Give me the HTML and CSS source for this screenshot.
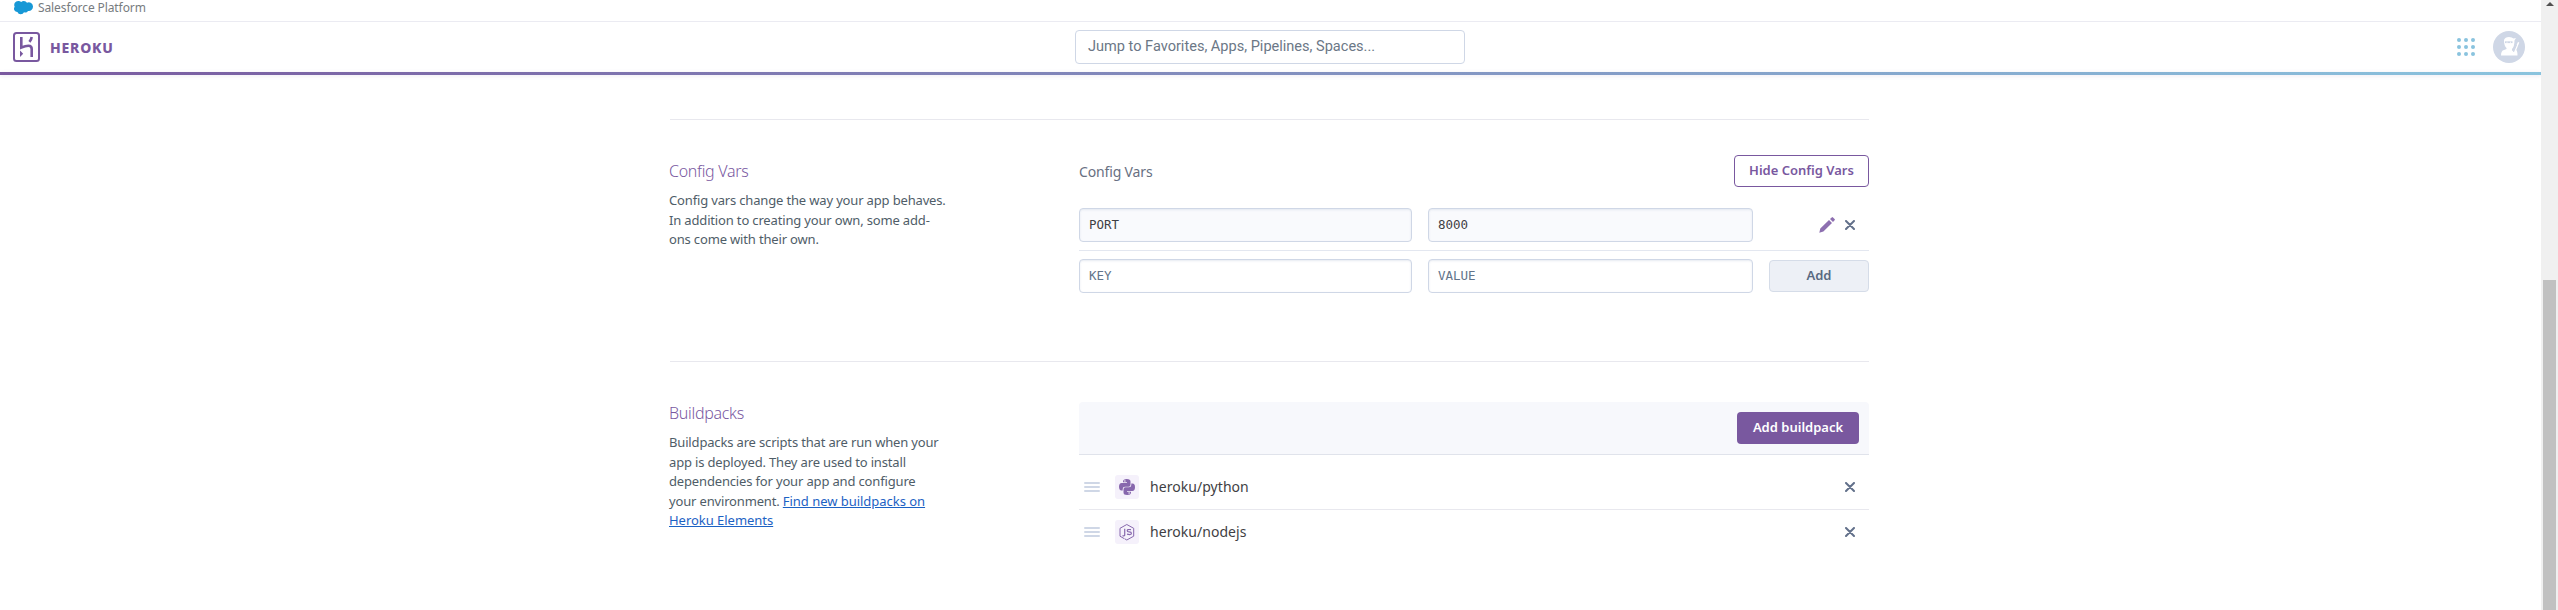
FILE: index.html
```
<!DOCTYPE html>
<html lang="en">
<head>
<meta charset="utf-8">
<title>Heroku Settings</title>
<link rel="stylesheet" href="styles.css">
</head>
<body>
<div class="page">
  <div class="platform">
    <svg class="cloud" width="20" height="15" viewBox="0 0 20 15"><path fill="#1798d6" d="M8.2 2.1A3.5 3.5 0 0 1 10.800 1a3.700 3.700 0 0 1 3.200 1.700A4.300 4.300 0 0 1 20 6.800a4.200 4.200 0 0 1-5 4.100 3.100 3.100 0 0 1-4 1.300 3.600 3.600 0 0 1-6.600-.2A3.300 3.300 0 0 1 1.700 6.700 3.900 3.900 0 0 1 5.200 1a3.900 3.900 0 0 1 3 1.100z"/></svg>
    <span class="platform-name">Salesforce Platform</span>
  </div>
  <header class="header">
    <div class="brand">
      <svg width="27" height="30" viewBox="0 0 27 30"><rect x="1" y="1" width="25" height="28" rx="2.500" fill="none" stroke="#79589f" stroke-width="2"/><g fill="none" stroke="#79589f" stroke-width="2.600"><path d="M8.300 5v10.500c3-1.200 5.200-1.700 7.200-1.700 2.800 0 3.200 1.700 3.200 3.200v8"/><path d="M18.700 5c-.2 1.700-1 3.300-2.300 4.900" /></g><path fill="#79589f" d="M7 18.500l3.200 3.200L7 25z"/></svg>
      <span class="brand-name">HEROKU</span>
    </div>
    <div class="search"><span class="search-text">Jump to Favorites, Apps, Pipelines, Spaces...</span></div>
    <div class="account">
      <svg width="18" height="18" viewBox="0 0 18 18" fill="#8ac3de"><circle cx="2" cy="2" r="2"/><circle cx="9" cy="2" r="2"/><circle cx="16" cy="2" r="2"/><circle cx="2" cy="9" r="2"/><circle cx="9" cy="9" r="2"/><circle cx="16" cy="9" r="2"/><circle cx="2" cy="16" r="2"/><circle cx="9" cy="16" r="2"/><circle cx="16" cy="16" r="2"/></svg>
      <svg width="32" height="32" viewBox="0 0 32 32"><circle cx="16" cy="16" r="16" fill="#cfd7e6"/><path fill="#fff" d="M11 9q1-3 5-3 3 0 4.500 1.500L23 7l-1.500 2.500q0 6-2.500 8.500v1.500l1.500 1L25 11l1.300.6-3 7.400q1.200 1 1.200 5.500H8q0-5 3-5.500l2.500-1v-1Q11 15 11 9z"/><path stroke="#cfd7e6" stroke-width="1.800" d="M12 11.200h7.500"/><path stroke="#fff" d="M14 10.700v1M17.500 10.700v1"/><path stroke="#cfd7e6" d="M20.500 21l3-7"/></svg>
    </div>
  </header>
  <div class="rainbow"></div>
  <main class="content">
    <section class="section section-config">
      <div class="intro">
        <h2 class="title">Config Vars</h2>
        <p class="desc">Config vars change the way your app behaves.<br>In addition to creating your own, some add-<br>ons come with their own.</p>
      </div>
      <div class="panel">
        <div class="panel-head"><span class="label">Config Vars</span><button class="btn btn-outline">Hide Config Vars</button></div>
        <div class="var-row var-row-set">
          <div class="field filled">PORT</div>
          <div class="field filled field-value">8000</div>
          <div class="tools">
            <svg width="16" height="16" viewBox="0 0 16 16" fill="#8d6fb0"><path d="M.3 15.700l1-4.200L10 3l3 3-8.600 8.500zM11 2l1.700-1.600q.6-.6 1.300 0l1.600 1.600q.6.700 0 1.300L14 5z"/></svg>
            <svg width="10" height="10" viewBox="0 0 10 10" fill="none" stroke="#62708a" stroke-width="2" stroke-linecap="round"><path d="M1 1l8 8M9 1l-8 8"/></svg>
          </div>
        </div>
        <div class="var-row var-row-new">
          <div class="field">KEY</div>
          <div class="field field-value">VALUE</div>
          <button class="btn btn-add">Add</button>
        </div>
      </div>
    </section>
    <section class="section section-build">
      <div class="intro">
        <h2 class="title">Buildpacks</h2>
        <p class="desc">Buildpacks are scripts that are run when your<br>app is deployed. They are used to install<br>dependencies for your app and configure<br>your environment. <a class="link">Find new buildpacks on<br>Heroku Elements</a></p>
      </div>
      <div class="panel panel-build">
        <div class="banner"><button class="btn btn-primary">Add buildpack</button></div>
        <div class="pack pack-first">
          <svg class="grip" width="16" height="10" viewBox="0 0 16 10" stroke="#cfd7e6" stroke-width="2" stroke-linecap="round"><path d="M1 1h14M1 5h14M1 9h14"/></svg>
          <svg class="pack-icon" width="24" height="24" viewBox="0 0 24 24"><rect width="24" height="24" rx="3" fill="#f5f1fb"/><g fill="#8767ad"><path d="M8 6.500Q8 4 11.800 4t3.700 2.500v3.200q0 2-2 2H10q-2.300 0-2.300 2.300v1.500H6.500Q4 15.500 4 11.800T6.700 8H12v-.7H8z"/><path d="M16 17.500q0 2.500-3.800 2.500t-3.700-2.500v-3.200q0-2 2-2H14q2.300 0 2.300-2.300V8.500h1.200q2.500 0 2.500 3.700T17.300 16H12v.7h4z"/></g><circle cx="9.900" cy="6" r=".7" fill="#fff"/><circle cx="14.100" cy="18" r=".7" fill="#fff"/></svg>
          <span class="pack-name">heroku/python</span>
          <svg class="remove" width="10" height="10" viewBox="0 0 10 10" fill="none" stroke="#62708a" stroke-width="2" stroke-linecap="round"><path d="M1 1l8 8M9 1l-8 8"/></svg>
        </div>
        <div class="pack">
          <svg class="grip" width="16" height="10" viewBox="0 0 16 10" stroke="#cfd7e6" stroke-width="2" stroke-linecap="round"><path d="M1 1h14M1 5h14M1 9h14"/></svg>
          <svg class="pack-icon" width="24" height="24" viewBox="0 0 24 24"><rect width="24" height="24" rx="3" fill="#f5f1fb"/><g fill="none" stroke="#8767ad" stroke-linejoin="round"><path d="M9 18.500l-4-2.300V8.300L11.800 4.500l6.900 3.800v7.900L11.800 20l-2.300-1.300"/><path stroke-width="1.200" d="M9.700 8.700v6.200q0 1.300-2.200.7M16 9.700q-3.800-.7-3.800 1 0 1.100 2 1.200 2.200.2 2.200 1.400 0 1.900-4.400.9"/></g></svg>
          <span class="pack-name">heroku/nodejs</span>
          <svg class="remove" width="10" height="10" viewBox="0 0 10 10" fill="none" stroke="#62708a" stroke-width="2" stroke-linecap="round"><path d="M1 1l8 8M9 1l-8 8"/></svg>
        </div>
      </div>
    </section>
  </main>
</div>
<div class="scrollbar"><div class="scroll-up"></div><div class="scroll-thumb"></div></div>
</body>
</html>
```

FILE: styles.css
```
* { box-sizing: border-box; }
body { margin: 0; display: flex; height: 610px; overflow: hidden; background: #fff; font-family: "Noto Sans", sans-serif; color: #596981; }
.page { width: 2541px; height: 610px; }
svg { display: block; flex: none; }
.platform { height: 22px; border-bottom: 1px solid #ebebf2; display: flex; align-items: flex-start; padding-left: 13px; gap: 5px; }
.platform-name { font-size: 12px; letter-spacing: -.1px; line-height: 16px; color: #777c80; white-space: nowrap; }
.header { height: 50px; display: grid; grid-template-columns: 1075px 390px 1fr; align-items: center; }
.brand { display: flex; align-items: center; gap: 10px; padding-left: 13px; height: 50px; }
.brand-name { font-size: 14px; font-weight: 800; letter-spacing: .8px; line-height: 20px; padding-top: 1px; color: #79589f; }
.search { height: 34px; border: 1px solid #cfd7e6; border-radius: 4px; padding-left: 12px; display: flex; align-items: center; font-family: Roboto, sans-serif; font-size: 14.550px; color: #6b7786; margin-top: -1px; white-space: nowrap; }
.account { display: flex; align-items: center; justify-content: flex-end; gap: 18px; padding-right: 16px; margin-top: -1px; }
.rainbow { height: 3px; background: linear-gradient(90deg, #79589f, #8ac3de); box-shadow: 0 1px 4px #79589f26; }
.content { width: 1199px; margin: 44px 0 0 670px; }
.section { border-top: 1px solid #e8e8ee; display: flex; gap: 109px; }
.section-config { height: 242px; }
.intro { width: 301px; margin-left: -1px; padding-top: 38px; }
.panel { width: 790px; padding-top: 35px; }
.title { margin: 0; font-size: 16px; line-height: 26px; font-weight: 300; letter-spacing: -.3px; color: #79589f; }
.desc { margin: 7px 0 0; font-size: 13px; line-height: 19.500px; letter-spacing: -.16px; color: #4f5d68; white-space: nowrap; }
.link { color: #1c62c4; text-decoration: underline; letter-spacing: -.03px; }
.panel-head { height: 32px; display: flex; justify-content: space-between; align-items: center; }
.label { font-size: 14px; letter-spacing: -.15px; color: #687082; padding-top: 1px; }
.btn { height: 32px; border-radius: 4px; font: 600 13px/18px "Noto Sans", sans-serif; padding: 0 0 2px; white-space: nowrap; }
.btn-outline { width: 135px; border: 1px solid #79589f; background: #fff; color: #79589f; }
.var-row { display: grid; grid-template-columns: 333px 325px 100px; column-gap: 16px; align-items: center; }
.var-row-set { height: 52px; margin-top: 12px; border-bottom: 1px solid #e3e7f0; }
.var-row-new { height: 50px; }
.field { height: 34px; border: 1px solid #cfd7e6; border-radius: 4px; padding-left: 9px; font: 12.500px/32px "DejaVu Sans Mono", monospace; color: #62748a; box-shadow: inset 0 1px 2px #cfd7e680; }
.field-value { line-height: 31px; }
.filled { background: #f9fafd; color: #3f3f44; }
.tools { display: flex; justify-content: flex-end; align-items: center; gap: 10px; padding-right: 14px; }
.btn-add { border: 1px solid #d5dce8; background: #edf0f6; color: #596981; }
.panel-build { padding-top: 40px; }
.banner { height: 53px; background: #f7f8fc; border-bottom: 1px solid #e0e3eb; border-radius: 4px 4px 0 0; display: flex; justify-content: flex-end; align-items: center; padding-right: 10px; }
.btn-primary { width: 122px; border: 0; background: #79589f; color: #fff; }
.pack { height: 44px; display: flex; align-items: center; padding: 0 14px 0 5px; }
.pack-first { height: 45px; margin-top: 10px; border-bottom: 1px solid #e8e8ee; }
.pack-icon { margin-left: 15px; }
.pack-name { margin-left: 11px; padding-bottom: 1px; font-size: 14px; letter-spacing: .05px; color: #3f3f44; }
.remove { margin-left: auto; }
.scrollbar { width: 17px; height: 610px; background: #f0f0f0; display: flex; flex-direction: column; align-items: center; justify-content: space-between; }
.scroll-up { border: 4px solid transparent; border-top: 0; border-bottom-color: #505050; margin-top: 2px; }
.scroll-thumb { width: 13px; height: 330px; background: #c1c1c1; }
```
